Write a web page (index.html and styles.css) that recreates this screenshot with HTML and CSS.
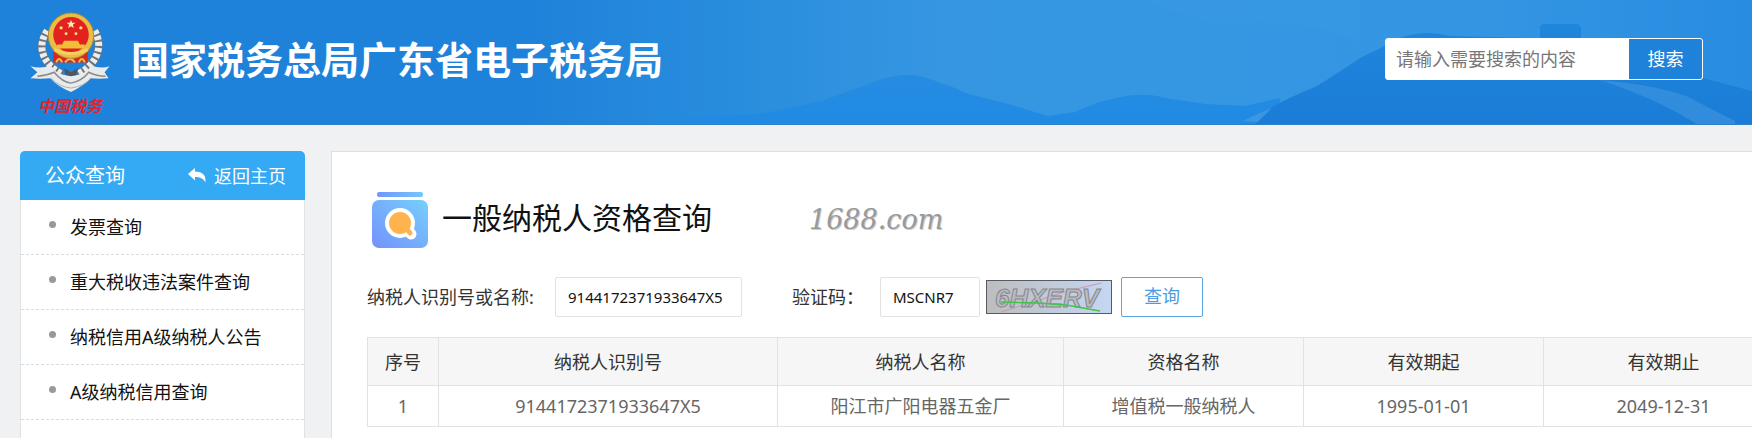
FILE: index.html
```html
<!DOCTYPE html>
<html lang="zh-CN">
<head>
<meta charset="utf-8">
<title>一般纳税人资格查询</title>
<meta name="viewport" content="width=device-width, initial-scale=1">
<link rel="stylesheet" href="styles.css">
</head>
<body>
<header class="banner">
  <svg class="banner-art" viewBox="0 0 1752 125" preserveAspectRatio="xMaxYMax slice" aria-hidden="true">
    <defs>
      <linearGradient id="sky" x1="0" y1="0" x2="1" y2="0">
        <stop offset="0" stop-color="#1f82da"/><stop offset=".3" stop-color="#1f82da"/>
        <stop offset=".42" stop-color="#298ddd"/><stop offset=".54" stop-color="#3696e2"/>
        <stop offset=".84" stop-color="#3496e3"/><stop offset="1" stop-color="#288ce0"/>
      </linearGradient>
      <linearGradient id="ridge" x1="0" y1="0" x2="0" y2="1">
        <stop offset="0" stop-color="#2086dc"/><stop offset="1" stop-color="#1a7cd6"/>
      </linearGradient>
      <linearGradient id="hill" x1="0" y1="0" x2="0" y2="1">
        <stop offset="0" stop-color="#258ce0"/><stop offset="1" stop-color="#208ae4"/>
      </linearGradient>
    </defs>
    <rect width="1752" height="125" fill="url(#sky)"/>
    <path d="M1140 0 Q1180 14 1215 25 Q1290 15 1360 42 V0Z" fill="#3b9ae4" opacity=".35"/>
    <path d="M660 120 Q700 117 765 113 Q800 106 828 99 Q850 90 862 87 Q885 76 904 75 Q922 74 940 83 Q955 87 965 93 L992 100 L1012 105 L1048 116 L1075 112 Q1095 102 1120 97 Q1145 92 1165 98 L1205 104 L1245 106 L1280 98 V125H660Z" fill="url(#hill)"/>
    <path d="M1255 125 Q1262 114 1272 107 Q1290 97 1315 87 Q1335 75 1360 58 Q1385 46 1400 38 Q1425 29 1450 36 L1540 38 V26 L1543 24 H1578 L1581 27 V40 L1640 62 L1703 78 L1752 91 V125Z" fill="url(#ridge)"/>
    <path d="M1243 121 Q1258 113 1272 108 L1258 122Z" fill="#4da0e4" opacity=".6"/>
    <path d="M1600 80 Q1650 84 1686 96 L1735 121 V125 H1698 Q1660 100 1600 80Z" fill="#3b91df" opacity=".75"/>
    <path d="M0 124.5H1752" stroke="#2f80c5"/>
  </svg>
  <div class="brand">
    <div class="emblem">
      <svg class="emblem-art" viewBox="0 0 82 82" aria-hidden="true">
        <g fill="none" stroke="#6d747b" stroke-width="8">
          <path d="M18 19 C8 33 11 51 33 63"/><path d="M66 19 C74 33 71 51 49 63"/>
        </g>
        <g fill="none" stroke="#eceeee" stroke-width="7" stroke-dasharray="4 2">
          <path d="M18 19 C8 33 11 51 33 63"/><path d="M66 19 C74 33 71 51 49 63"/>
        </g>
        <path d="M24 38h35v13H24z" fill="#dc2620"/>
        <path d="M27 51q3-7 6 0M36 51q5-7 10 0M50 51q3-7 6 0" fill="none" stroke="#f0c040" stroke-width="2"/>
        <circle cx="42" cy="24" r="23" fill="#e8bd48"/>
        <circle cx="42" cy="24" r="23" fill="none" stroke="#b98b2b"/>
        <circle cx="42" cy="23" r="18" fill="#e3211e"/>
        <path d="M42 8l1.200 3h3.300l-2.600 2 1 3.200-2.900-1.900-2.900 1.900 1-3.200-2.600-2h3.300z" fill="#fff0b0"/>
        <g fill="#ffdc83"><circle cx="32" cy="16" r="1.700"/><circle cx="52" cy="16" r="1.700"/><circle cx="37" cy="22" r="1.500"/><circle cx="47" cy="22" r="1.500"/></g>
        <path d="M35 29h14l2 4h5v4H28v-4h5z" fill="#f3bd39"/>
        <path d="M25 38q17 8 34 0" stroke="#f6d15d" stroke-width="3" fill="none"/>
        <path d="M35 57l7 4 7-4-2 8H37z" fill="#50565c"/>
        <path d="M1 55q11 3 21-1 3 9 20 11 17-2 20-11 10 4 19 1l-5 6 4 6q-10 1-18 0-8 8-20 14-14-6-21-14-10 1-20 0l7-6z" fill="#e9eaea"/>
        <path d="M8 65q10-1 17-4 8 10 17 11 11-2 18-11 8 4 17 4" fill="none" stroke="#858b90" stroke-width="1.500"/>
        <path d="M22 67q8 9 20 10 14-2 20-10" fill="none" stroke="#aeb2b5"/>
      </svg>
      <span class="emblem-name">中国税务</span>
    </div>
    <h1 class="site-title">国家税务总局广东省电子税务局</h1>
  </div>
  <form class="search" role="search">
    <input class="search-input" type="search" aria-label="搜索内容" placeholder="请输入需要搜索的内容">
    <button class="search-button" type="button">搜索</button>
  </form>
</header>

<div class="page">
  <nav class="sidebar" aria-label="公众查询">
    <div class="sidebar-head">
      <h2 class="sidebar-title">公众查询</h2>
      <a class="home-link" href="#">
        <svg class="reply-icon" viewBox="0 0 18 15" aria-hidden="true"><path d="M0 6L7 0V3.500C14 3.500 18.500 7 17.300 14.500C15.500 10.500 12 9 7 9V12.500Z" fill="currentColor"/></svg>
        返回主页
      </a>
    </div>
    <ul class="menu">
      <li><a class="menu-link" href="#">发票查询</a></li>
      <li><a class="menu-link" href="#">重大税收违法案件查询</a></li>
      <li><a class="menu-link" href="#">纳税信用A级纳税人公告</a></li>
      <li><a class="menu-link" href="#">A级纳税信用查询</a></li>
    </ul>
  </nav>

  <main class="panel">
    <div class="panel-head">
      <svg class="query-icon" viewBox="0 0 56 56" aria-hidden="true">
        <defs>
          <linearGradient id="tile" x1="0" y1="1" x2="1" y2="0"><stop offset="0" stop-color="#7491fb"/><stop offset="1" stop-color="#76cffc"/></linearGradient>
          <linearGradient id="lid"><stop offset="0" stop-color="#7197fa"/><stop offset="1" stop-color="#74c6fb"/></linearGradient>
        </defs>
        <rect x="5" width="46" height="5" rx="2" fill="url(#lid)"/>
        <rect y="8" width="56" height="48" rx="7" fill="url(#tile)"/>
        <path d="M36 38L39 42" stroke="#fff" stroke-width="11" stroke-linecap="round"/>
        <circle cx="28" cy="31" r="15" fill="#fff"/>
        <circle cx="28" cy="31" r="11" fill="#ffb34f"/>
        <path d="M34 36L38 41" stroke="#ffb34f" stroke-width="5" stroke-linecap="round"/>
      </svg>
      <h2 class="panel-title">一般纳税人资格查询</h2>
      <span class="watermark">1688.com</span>
    </div>

    <form class="filters">
      <label class="label-id" for="taxpayer">纳税人识别号或名称:</label>
      <input class="field field-id" id="taxpayer" type="text" value="9144172371933647X5">
      <label class="label-code" for="code">验证码：</label>
      <input class="field field-code" id="code" type="text" value="MSCNR7">
      <svg class="captcha" viewBox="0 0 126 34" role="img" aria-label="验证码图片">
        <defs><linearGradient id="noise"><stop offset="0" stop-color="#bdbdbd"/><stop offset="1" stop-color="#c5d7f3"/></linearGradient></defs>
        <rect x=".5" y=".5" width="125" height="33" fill="url(#noise)" stroke="#555b66"/>
        <path d="M15 32L44 23L78 12L115 3" stroke="#c99aac" fill="none"/>
        <text class="captcha-text" x="9" y="27">6HXERV</text>
        <path d="M15 22L52 23L80 25L114 31" stroke="#3fc54b" stroke-width="1.500" fill="none"/>
      </svg>
      <button class="query-button" type="button">查询</button>
    </form>

    <table class="results">
      <colgroup><col class="col-no"><col class="col-id"><col class="col-name"><col class="col-date"><col class="col-date"><col class="col-date"></colgroup>
      <thead><tr><th>序号</th><th>纳税人识别号</th><th>纳税人名称</th><th>资格名称</th><th>有效期起</th><th>有效期止</th></tr></thead>
      <tbody><tr><td>1</td><td>9144172371933647X5</td><td>阳江市广阳电器五金厂</td><td>增值税一般纳税人</td><td>1995-01-01</td><td>2049-12-31</td></tr></tbody>
    </table>
  </main>
</div>
</body>
</html>
```

FILE: styles.css
```css
* { box-sizing: border-box; }

body {
  display: flex;
  flex-direction: column;
  min-height: 100vh;
  margin: 0;
  background: #eff1f3;
  color: #111;
  font: 400 18px/24px "Noto Sans", "Noto Sans CJK SC", sans-serif;
}

h1, h2, ul { margin: 0; padding: 0; }
input, button { font: inherit; }
a { color: inherit; text-decoration: none; }

/* Banner */
.banner {
  position: relative;
  display: flex;
  justify-content: space-between;
  align-items: center;
  padding: 12px 49px 8px 29px;
  background: #1f82da;
}
.banner-art {
  position: absolute;
  inset: 0;
  width: 100%;
  height: 100%;
}
.brand, .search { position: relative; }
.brand {
  display: flex;
  align-items: center;
  gap: 20px;
}
.emblem {
  display: flex;
  flex-direction: column;
  align-items: center;
  width: 82px;
}
.emblem-art { width: 82px; height: 81px; }
.emblem-name {
  color: #e0242c;
  font: italic 700 16px/24px "Noto Sans CJK SC", sans-serif;
}
.site-title {
  padding-bottom: 11px;
  color: #fff;
  font-size: 38px;
  line-height: 48px;
  font-weight: 700;
}
.search {
  display: flex;
  width: 318px;
  height: 42px;
  margin-bottom: 11px;
  border: 1px solid #fff;
  border-radius: 3px;
  background: #fff;
  overflow: hidden;
}
.search-input {
  flex: 1;
  min-width: 0;
  padding: 0 10px;
  border: 0;
  background: #fff;
  appearance: none;
}
.search-input::placeholder { color: #777; opacity: 1; }
.search-button {
  width: 73px;
  padding: 0;
  border: 0;
  background: #1f82da;
  color: #fff;
}

/* Page */
.page {
  display: flex;
  flex: 1;
  gap: 26px;
  padding: 26px 0 0 20px;
}

.sidebar {
  flex: 0 0 285px;
  border: 1px solid #dfe3e6;
  border-width: 0 1px;
  border-radius: 5px 5px 0 0;
  background: #fff;
}
.sidebar-head {
  display: flex;
  align-items: center;
  justify-content: space-between;
  height: 49px;
  margin: 0 -1px;
  padding: 0 19px 0 25px;
  border-radius: 5px 5px 0 0;
  background: #35aaf4;
  color: #fff;
}
.sidebar-title { font-size: 20px; font-weight: 400; }
.home-link { display: flex; align-items: center; gap: 8px; }
.reply-icon { width: 18px; height: 15px; }
.menu { list-style: none; }
.menu-link {
  display: flex;
  align-items: center;
  height: 55px;
  padding-left: 28px;
  border-bottom: 1px dashed #d9dcde;
}
.menu-link::before {
  content: "";
  width: 7px;
  height: 7px;
  margin: 0 14px 6px 0;
  border-radius: 50%;
  background: #999;
}

/* Query panel */
.panel {
  flex: 1;
  min-width: 0;
  padding: 40px 0 11px 35px;
  border: 1px solid #dcdfe1;
  border-width: 1px 0 0 1px;
  background: #fff;
  overflow: hidden;
}
.panel-head {
  display: flex;
  align-items: center;
  padding-left: 5px;
}
.query-icon { width: 56px; height: 56px; }
.panel-title {
  padding: 0 97px 4px 14px;
  font-size: 30px;
  line-height: 40px;
  font-weight: 400;
  white-space: nowrap;
}
.watermark {
  color: #999;
  font: italic 400 27px/32px "DejaVu Serif", serif;
  text-shadow: 1px 1px 0 #ccc;
}
.filters {
  display: flex;
  align-items: center;
  padding: 29px 0 20px;
  color: #333;
  white-space: nowrap;
}
.label-id { width: 188px; }
.label-code { width: 88px; }
.field {
  height: 40px;
  padding: 0 12px;
  border: 1px solid #e2e2e2;
  border-radius: 2px;
  background: #fff;
  color: #111;
  font-size: 15px;
}
.field-id { width: 187px; margin-right: 50px; }
.field-code { width: 100px; margin-right: 6px; }
.captcha { width: 126px; height: 34px; margin-right: 9px; }
.captcha-text {
  fill: #b9bbc0;
  stroke: #85878d;
  font: italic 700 26px "Liberation Sans", sans-serif;
}
.query-button {
  width: 82px;
  height: 40px;
  padding: 0 0 2px;
  border: 1px solid #5aa5e0;
  border-radius: 2px;
  background: #fff;
  color: #4b9de2;
}

.results {
  width: 1416px;
  table-layout: fixed;
  border-collapse: collapse;
  color: #666;
  text-align: center;
}
.results th, .results td {
  padding: 0;
  border: 1px solid #e2e2e2;
  font-weight: 400;
}
.results th { height: 48px; background: #f6f6f6; color: #333; }
.results td { height: 41px; }
.col-no { width: 71px; }
.col-id { width: 339px; }
.col-name { width: 286px; }
.col-date { width: 240px; }
```
